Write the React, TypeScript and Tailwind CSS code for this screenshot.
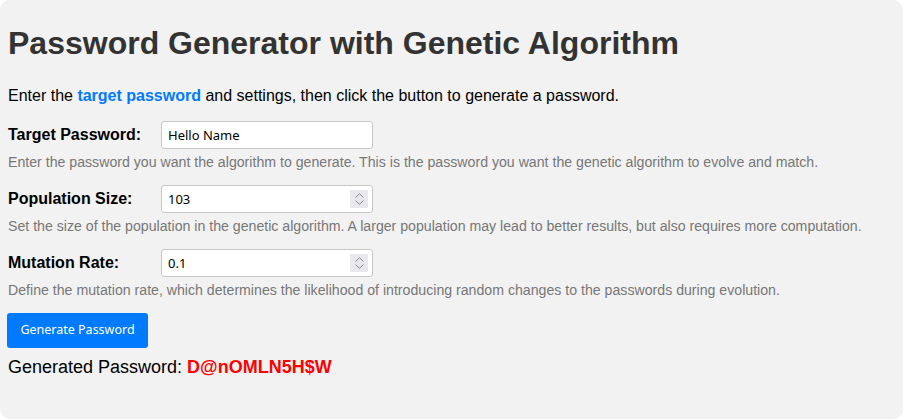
import React from "react"

const fields = [
  {
    label: "Target Password:",
    value: "Hello Name",
    spinner: false,
    help: "Enter the password you want the algorithm to generate. This is the password you want the genetic algorithm to evolve and match.",
  },
  {
    label: "Population Size:",
    value: "103",
    spinner: true,
    help: "Set the size of the population in the genetic algorithm. A larger population may lead to better results, but also requires more computation.",
  },
  {
    label: "Mutation Rate:",
    value: "0.1",
    spinner: true,
    help: "Define the mutation rate, which determines the likelihood of introducing random changes to the passwords during evolution.",
  },
]

const Spinner = () => (
  <div className="absolute right-[5px] top-[5px] w-[18px] h-[18px] bg-[#e9e9ed] flex flex-col items-center justify-center gap-[2px]">
    <svg width="9" height="5" viewBox="0 0 9 5" fill="none">
      <path d="M0.5 4.5 L4.5 0.8 L8.5 4.5" stroke="#8a8a8a" strokeWidth="1" />
    </svg>
    <svg width="9" height="5" viewBox="0 0 9 5" fill="none">
      <path d="M0.5 0.5 L4.5 4.2 L8.5 0.5" stroke="#8a8a8a" strokeWidth="1" />
    </svg>
  </div>
)

export default function App() {
  return (
    <div className="bg-white font-['Liberation_Sans',Arial,sans-serif]">
      <div className="w-full h-[419px] bg-[#f2f2f2] rounded-[10px] px-[8px] pt-[25px]">
        <h1 className="text-[32px] leading-[37px] font-bold text-[#333]">
          Password Generator with Genetic Algorithm
        </h1>
        <p className="mt-[25px] text-[16px] leading-[18px] text-black">
          Enter the <span className="font-bold text-[#007bff]">target password</span> and settings, then click the button to generate a password.
        </p>

        <div className="mt-[16px] flex flex-col gap-[15px]">
          {fields.map((f) => (
            <div key={f.label}>
              <div className="flex items-center h-[28px]">
                <label className="w-[153px] text-[16px] font-bold text-black">{f.label}</label>
                <div className="relative">
                  <input
                    readOnly
                    value={f.value}
                    className="w-[212px] h-[28px] bg-white border border-[#c8c8c8] rounded-[3px] pl-[6px] text-[13px] text-black font-['Noto_Sans','Liberation_Sans',sans-serif] outline-none"
                  />
                  {f.spinner && <Spinner />}
                </div>
              </div>
              <p className="mt-[5px] text-[14.15px] leading-[16px] text-[#777]">{f.help}</p>
            </div>
          ))}
        </div>

        <button className="mt-[15px] -ml-[1px] w-[141px] h-[35px] bg-[#007bff] rounded-[3px] text-white text-[12.5px] font-['Noto_Sans','Liberation_Sans',sans-serif]">
          Generate Password
        </button>

        <p className="mt-[9px] text-[18px] leading-[21px] text-black">
          Generated Password: <span className="font-bold text-[#ff0000]">D@nOMLN5H$W</span>
        </p>
      </div>
    </div>
  )
}
